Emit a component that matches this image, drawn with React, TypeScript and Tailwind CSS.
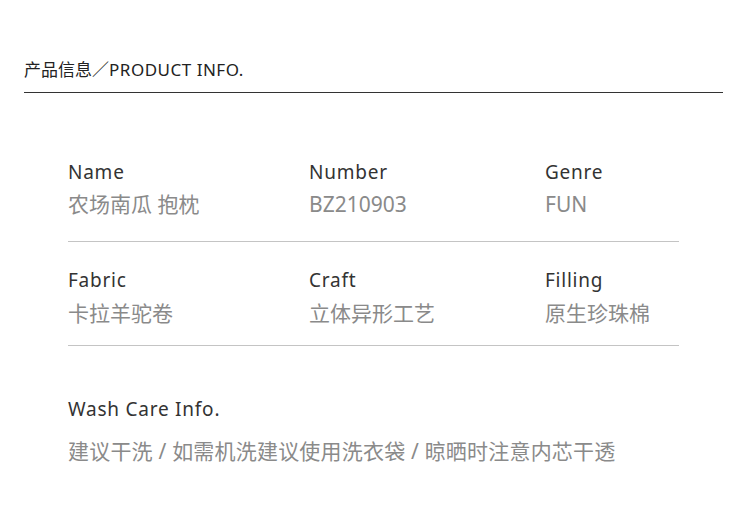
const font = "font-['Noto_Sans','Noto_Sans_CJK_SC',sans-serif]";

const rows = [
  [
    { label: "Name", value: "农场南瓜 抱枕" },
    { label: "Number", value: "BZ210903" },
    { label: "Genre", value: "FUN" },
  ],
  [
    { label: "Fabric", value: "卡拉羊驼卷" },
    { label: "Craft", value: "立体异形工艺" },
    { label: "Filling", value: "原生珍珠棉" },
  ],
];

export default function App() {
  return (
    <div className={`w-[750px] h-[514px] bg-white ${font}`}>
      <div className="pt-[59px] pl-[24px] pr-[27px]">
        <div className="border-b border-[#333] pb-[12px] text-[17px] leading-[21px] text-[#222]">
          产品信息／<span className="tracking-[0.03em]">PRODUCT INFO.</span>
        </div>
      </div>

      <div className="ml-[68px] w-[611px] mt-[67px]">
        {rows.map((row, i) => (
          <div
            key={i}
            className={`grid grid-cols-[241px_236px_1fr] border-b border-[#c4c4c4] ${
              i === 0 ? "pb-[23px]" : "pt-[26px] pb-[18px]"
            }`}
          >
            {row.map((item) => (
              <div key={item.label}>
                <div className="text-[19px] leading-[24px] tracking-[0.04em] text-[#333]">
                  {item.label}
                </div>
                <div
                  className={`${i === 0 ? "mt-[6px]" : "mt-[7px]"} text-[21px] leading-[28px] text-[#8a8a8a]`}
                >
                  {item.value}
                </div>
              </div>
            ))}
          </div>
        ))}

        <div className="mt-[51px] text-[19px] leading-[24px] tracking-[0.04em] text-[#333]">
          Wash Care Info.
        </div>
        <div className="mt-[16px] text-[21px] leading-[28px] tracking-[0.2px] text-[#8a8a8a]">
          建议干洗 / 如需机洗建议使用洗衣袋 / 晾晒时注意内芯干透
        </div>
      </div>
    </div>
  );
}
